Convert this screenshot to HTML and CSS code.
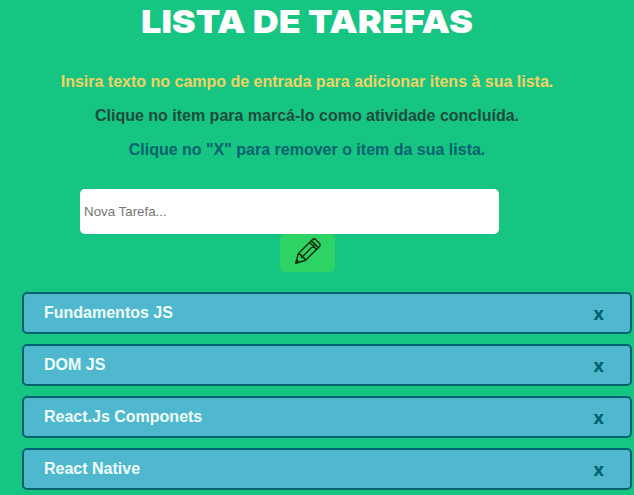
FILE: index.html
```html
<!DOCTYPE html>
<html lang="pt-BR">
<head>
<meta charset="utf-8">
<title>Lista de Tarefas</title>
<link rel="stylesheet" href="styles.css">
</head>
<body>
<main class="app">
  <h1 class="title">LISTA DE TAREFAS</h1>
  <div class="help">
    <p class="help-add">Insira texto no campo de entrada para adicionar itens à sua lista.</p>
    <p class="help-mark">Clique no item para marcá-lo como atividade concluída.</p>
    <p class="help-remove">Clique no "X" para remover o item da sua lista.</p>
  </div>
  <div class="entry">
    <input class="entry-input" type="text" placeholder="Nova Tarefa...">
    <button class="entry-button" type="button" aria-label="Adicionar">
      <svg width="26" height="26" viewBox="0 0 26 26" fill="none" stroke="#10340f" stroke-width="1.5" stroke-linejoin="round">
        <path d="M1 25 3.2 15.8 17.3 1.7Q19 .1 20.7 1.6L24.4 5.3Q25.8 7 24.3 8.7L10.2 22.6Z"/>
        <path d="M3.2 15.8 6 16.7 6.7 19.4 9.4 20 10.2 22.6M6.7 19.4 19.3 6.8M14.6 4.4 21.5 11.4M16.4 2.6 23.4 9.6"/>
        <path d="M1 25 1.8 22 4 24.2Z" fill="#10340f"/>
      </svg>
    </button>
  </div>
  <ul class="tasks">
    <li class="task"><span>Fundamentos JS</span><span class="remove">x</span></li>
    <li class="task"><span>DOM JS</span><span class="remove">x</span></li>
    <li class="task"><span>React.Js Componets</span><span class="remove">x</span></li>
    <li class="task"><span>React Native</span><span class="remove">x</span></li>
  </ul>
</main>
</body>
</html>
```
FILE: styles.css
```css
* { box-sizing: border-box; }
body {
  margin: 0;
  height: 495px;
  overflow: hidden;
  background: #16c582;
  font: bold 16px/18px "Liberation Sans", Arial, sans-serif;
}
.app { width: 634px; }
.title {
  margin: 0 20px 0 0;
  height: 73px;
  text-align: center;
  color: #fff;
  font: 900 32px/43px Inter, "Liberation Sans", sans-serif;
  white-space: nowrap;
  transform: scaleX(1.122);
}
.help { margin-right: 20px; text-align: center; }
.help p { margin: 0 0 16px; }
.help-add { color: #f0d264; }
.help-mark { color: #1b4d3e; }
.help-remove { color: #00626f; }
.entry {
  display: flex;
  flex-direction: column;
  width: 419px;
  margin: 30px 0 20px 80px;
}
.entry-input {
  width: 419px;
  height: 45px;
  padding: 0 4px;
  border: 0;
  border-radius: 5px;
  background: #fff;
  font: 13.333px "Liberation Sans", Arial, sans-serif;
}
.entry-input::placeholder { color: #757575; }
.entry-button {
  display: flex;
  align-items: center;
  justify-content: center;
  width: 55px;
  height: 38px;
  margin-left: 200px;
  padding: 0 0 4px;
  border: 0;
  border-radius: 5px;
  background: #2dd465;
}
.tasks {
  display: flex;
  flex-direction: column;
  gap: 10px;
  margin: 0 2px 0 22px;
  padding: 0;
  list-style: none;
}
.task {
  display: flex;
  justify-content: space-between;
  height: 42px;
  padding: 10px 26px 0 20px;
  border: 2px solid #00626f;
  border-radius: 5px;
  background: #4fb8cf;
  color: #f0ffff;
}
.remove {
  color: #00626f;
  font: bold 18px/18px "Open Sans", "DejaVu Sans", sans-serif;
}
```
